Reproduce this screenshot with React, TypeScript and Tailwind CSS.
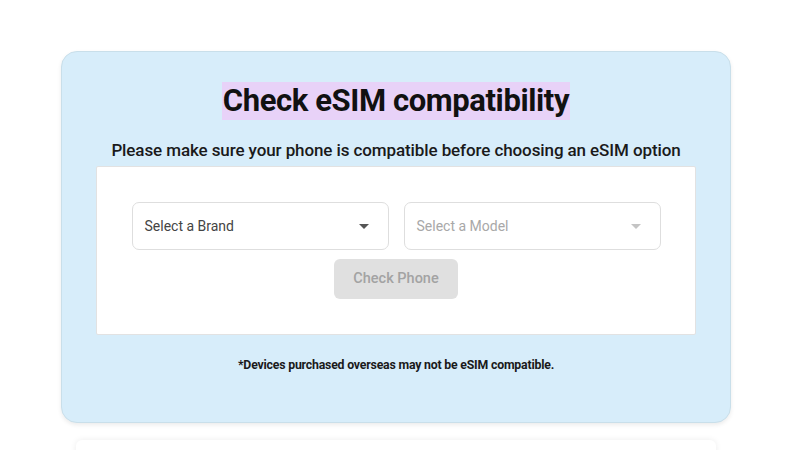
function Caret({ muted }: { muted?: boolean }) {
  return (
    <svg
      viewBox="0 0 10 5"
      className={`w-[10px] h-[5px] ${muted ? "fill-[#c4c4c4]" : "fill-[#555555]"}`}
    >
      <path d="M0 0h10L5 5z" />
    </svg>
  );
}

function SelectBox({ label, muted }: { label: string; muted?: boolean }) {
  return (
    <div className="flex h-[48px] w-[257px] items-center justify-between rounded-[7px] border border-[#dedede] bg-white pl-[12px] pr-[19px]">
      <span className={`text-[14px] ${muted ? "text-[#a8a8a8]" : "text-[#444444]"}`}>
        {label}
      </span>
      <Caret muted={muted} />
    </div>
  );
}

export default function App() {
  return (
    <div
      className="h-[450px] w-[800px] overflow-hidden bg-white pt-[51px]"
      style={{ fontFamily: "Roboto, 'Liberation Sans', sans-serif" }}
    >
      <div className="ml-[61px] flex h-[372px] w-[670px] flex-col items-center rounded-[16px] border border-[#c9dfea] bg-[#d7edfa] px-[35px] pt-[30px] shadow-[0_2px_4px_rgba(0,0,0,0.08)]">
        <h1 className="bg-[#e8d2f8] px-[1px] text-[31px] font-bold leading-[38px] tracking-[-0.4px] text-[#111111]">
          Check eSIM compatibility
        </h1>
        <p className="mt-[18px] text-[17px] font-medium leading-[24px] tracking-[-0.1px] text-[#1a1a1a]">
          Please make sure your phone is compatible before choosing an eSIM option
        </p>
        <div className="mt-[4px] flex h-[169px] w-[600px] flex-col items-center rounded-[2px] border border-[#e2e2e2] bg-white pt-[35px]">
          <div className="flex gap-[15px]">
            <SelectBox label="Select a Brand" />
            <SelectBox label="Select a Model" muted />
          </div>
          <button className="mt-[9px] h-[40px] w-[124px] rounded-[6px] bg-[#e0e0e0] text-[14.5px] font-medium text-[#a3a3a3]">
            Check Phone
          </button>
        </div>
        <p className="mt-[21px] text-[12.3px] font-bold tracking-[-0.2px] text-[#1a1a1a]">
          *Devices purchased overseas may not be eSIM compatible.
        </p>
      </div>
      <div className="ml-[76px] mt-[17px] h-[40px] w-[640px] rounded-[6px] bg-white shadow-[0_0_6px_rgba(0,0,0,0.08)]" />
    </div>
  );
}
